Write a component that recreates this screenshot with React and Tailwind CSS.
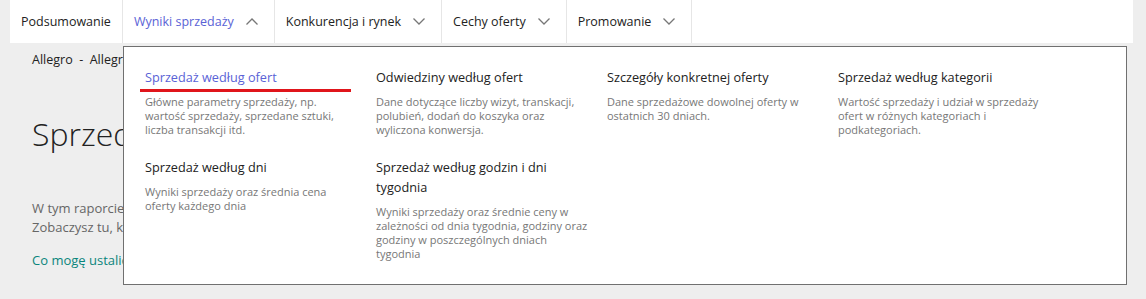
import React from "react";

const Chevron = ({ up }) => (
  <svg width="12" height="7" viewBox="0 0 12 7" className="shrink-0">
    <path
      d={up ? "M0.5 6.5 L6 1 L11.5 6.5" : "M0.5 0.5 L6 6 L11.5 0.5"}
      fill="none"
      stroke="#777777"
      strokeWidth="1.3"
    />
  </svg>
);

const navItems = [
  { label: "Podsumowanie", chevron: false },
  { label: "Wyniki sprzedaży", chevron: true, active: true },
  { label: "Konkurencja i rynek", chevron: true },
  { label: "Cechy oferty", chevron: true },
  { label: "Promowanie", chevron: true },
];

const menu = [
  {
    title: "Sprzedaż według ofert",
    desc: "Główne parametry sprzedaży, np. wartość sprzedaży, sprzedane sztuki, liczba transakcji itd.",
    active: true,
    w: "w-[206px]",
  },
  {
    title: "Odwiedziny według ofert",
    desc: "Dane dotyczące liczby wizyt, transkacji, polubień, dodań do koszyka oraz wyliczona konwersja.",
    w: "w-[216px]",
  },
  {
    title: "Szczegóły konkretnej oferty",
    desc: "Dane sprzedażowe dowolnej oferty w ostatnich 30 dniach.",
    w: "w-[206px]",
  },
  {
    title: "Sprzedaż według kategorii",
    desc: "Wartość sprzedaży i udział w sprzedaży ofert w różnych kategoriach i podkategoriach.",
    w: "w-[206px]",
  },
  {
    title: "Sprzedaż według dni",
    desc: "Wyniki sprzedaży oraz średnia cena oferty każdego dnia",
    w: "w-[206px]",
  },
  {
    title: "Sprzedaż według godzin i dni tygodnia",
    desc: "Wyniki sprzedaży oraz średnie ceny w zależności od dnia tygodnia, godziny oraz godziny w poszczególnych dniach tygodnia",
    w: "w-[216px]",
  },
];

export default function App() {
  return (
    <div
      className="relative w-[1146px] h-[299px] overflow-hidden bg-[#eeeeee] text-[#222222]"
      style={{ fontFamily: '"Open Sans", "Noto Sans", sans-serif' }}
    >
      {/* Top navigation */}
      <nav className="ml-[10px] w-[1123px] h-[43px] bg-white flex">
        {navItems.map((item) => (
          <div
            key={item.label}
            className={
              "h-full flex items-center gap-[12px] pl-[11px] border-r border-[#e6e6e6] text-[12.5px] leading-[20px] " +
              (item.chevron ? "pr-[16px] " : "pr-[11px] ") +
              (item.active ? "text-[#5a62d6]" : "text-[#222222]")
            }
          >
            <span>{item.label}</span>
            {item.chevron && <Chevron up={item.active} />}
          </div>
        ))}
      </nav>

      {/* Page content behind dropdown */}
      <div className="pl-[32px] pt-[7px]">
        <div className="text-[12.5px] leading-[20px] text-[#222222]">
          Allegro&nbsp;&nbsp;-&nbsp;&nbsp;Allegro Analytics
        </div>
        <h1 className="mt-[44px] text-[32px] leading-[40px] font-light text-[#222222]">
          Sprzedaż według ofert
        </h1>
        <div className="mt-[45px] text-[13px] leading-[19px] text-[#666666]">
          <p>W tym raporcie znajdziesz najważniejsze parametry sprzedaży dla Twoich ofert.</p>
          <p>Zobaczysz tu, które oferty sprzedają się najlepiej.</p>
        </div>
        <div className="mt-[14px] text-[13px] leading-[19px] text-[#0a857c]">
          Co mogę ustalić na podstawie tego raportu?
        </div>
      </div>

      {/* Dropdown menu */}
      <div className="absolute left-[123px] top-[46px] w-[1004px] h-[239px] bg-white border border-[#707070] pl-[16px] pt-[20px]">
        <div className="grid grid-cols-[211px_211px_211px_211px] gap-x-[20px] gap-y-[20px]">
          {menu.map((m) => (
            <div key={m.title} className="relative pl-[5px]">
              <div
                className={
                  "text-[12.7px] leading-[20px] w-[206px] " +
                  (m.active ? "text-[#5a62d6]" : "text-[#222222]")
                }
              >
                {m.title}
              </div>
              {m.active && (
                <div className="absolute left-0 top-[22px] w-[211px] h-[3px] bg-[#e0151b]" />
              )}
              <div className={"mt-[8px] text-[11px] leading-[14px] text-[#777777] " + m.w}>
                {m.desc}
              </div>
            </div>
          ))}
        </div>
      </div>
    </div>
  );
}
